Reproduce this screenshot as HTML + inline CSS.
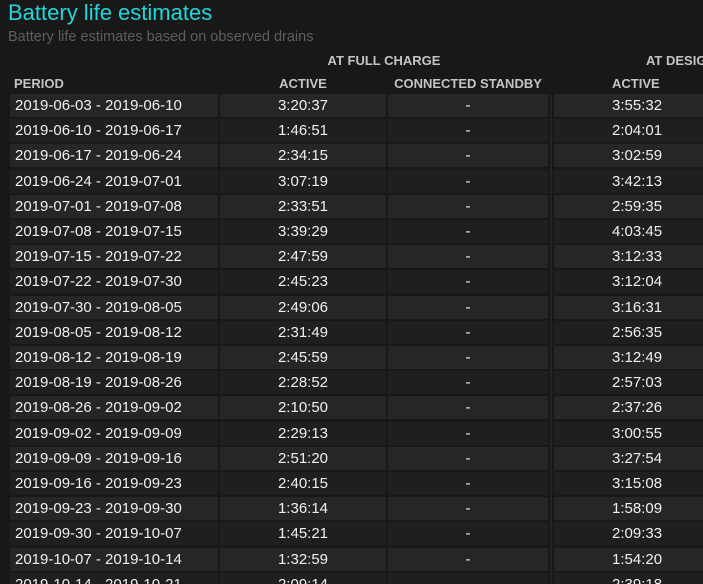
<!DOCTYPE html>
<html style="overflow:hidden;width:703px;height:584px"><head><style>
body{margin:0;background:#181818;width:703px;height:584px;overflow:hidden;position:relative;font-family:"Liberation Sans",sans-serif;}
.t{position:absolute;left:8px;top:0px;font-size:22px;color:#1ed6dc;}
.s{position:absolute;left:8px;top:29px;font-size:14.5px;color:#5e5e5e;}
.h{position:absolute;font-size:13px;font-weight:bold;color:#c4c4c4;text-align:center;white-space:nowrap;overflow:hidden}
.c{position:absolute;height:23px;line-height:23px;font-size:15px;color:#f0f0f0;white-space:nowrap;overflow:hidden}
.sep{position:absolute;left:550px;top:94px;width:2px;height:490px;background:#232323}
</style></head><body>
<div class="t">Battery life estimates</div>
<div class="s">Battery life estimates based on observed drains</div>
<div class="h" style="left:220px;width:328px;top:53px">AT FULL CHARGE</div>
<div class="h" style="left:554px;width:149px;top:53px;text-align:left;padding-left:92px;box-sizing:border-box">AT DESIGN CAPACITY</div>
<div class="h" style="left:14px;top:76px">PERIOD</div>
<div class="h" style="left:220px;width:166px;top:76px">ACTIVE</div>
<div class="h" style="left:388px;width:160px;top:76px">CONNECTED STANDBY</div>
<div class="h" style="left:554px;width:149px;top:76px;text-align:left;padding-left:58px;box-sizing:border-box">ACTIVE</div>
<div class="sep"></div>
<div id="rows"></div>
<script>
var d=[["2019-06-03 - 2019-06-10","3:20:37","3:55:32"],["2019-06-10 - 2019-06-17","1:46:51","2:04:01"],["2019-06-17 - 2019-06-24","2:34:15","3:02:59"],["2019-06-24 - 2019-07-01","3:07:19","3:42:13"],["2019-07-01 - 2019-07-08","2:33:51","2:59:35"],["2019-07-08 - 2019-07-15","3:39:29","4:03:45"],["2019-07-15 - 2019-07-22","2:47:59","3:12:33"],["2019-07-22 - 2019-07-30","2:45:23","3:12:04"],["2019-07-30 - 2019-08-05","2:49:06","3:16:31"],["2019-08-05 - 2019-08-12","2:31:49","2:56:35"],["2019-08-12 - 2019-08-19","2:45:59","3:12:49"],["2019-08-19 - 2019-08-26","2:28:52","2:57:03"],["2019-08-26 - 2019-09-02","2:10:50","2:37:26"],["2019-09-02 - 2019-09-09","2:29:13","3:00:55"],["2019-09-09 - 2019-09-16","2:51:20","3:27:54"],["2019-09-16 - 2019-09-23","2:40:15","3:15:08"],["2019-09-23 - 2019-09-30","1:36:14","1:58:09"],["2019-09-30 - 2019-10-07","1:45:21","2:09:33"],["2019-10-07 - 2019-10-14","1:32:59","1:54:20"],["2019-10-14 - 2019-10-21","2:09:14","2:39:18"]];
var h="";
d.forEach(function(r,i){var top=Math.round(94+i*25.2);var ht=Math.min(23,584-top);var bg=i%2?"#1f1f1f":"#262626";
function cell(l,w,txt,al,pad){h+='<div class="c" style="left:'+l+'px;width:'+w+'px;top:'+top+'px;height:'+ht+'px;background:'+bg+';text-align:'+al+';'+(pad?'padding-left:'+pad+'px;box-sizing:border-box;':'')+'">'+txt+'</div>';}
cell(10,208,r[0],"left",5);cell(220,166,r[1],"center");cell(388,160,"-","center");h+='<div class="c" style="left:554px;width:149px;top:'+top+'px;height:'+ht+'px;background:'+bg+';padding-left:58px;box-sizing:border-box">'+r[2]+'</div>';});
document.getElementById("rows").innerHTML=h;
</script>
</body></html>
